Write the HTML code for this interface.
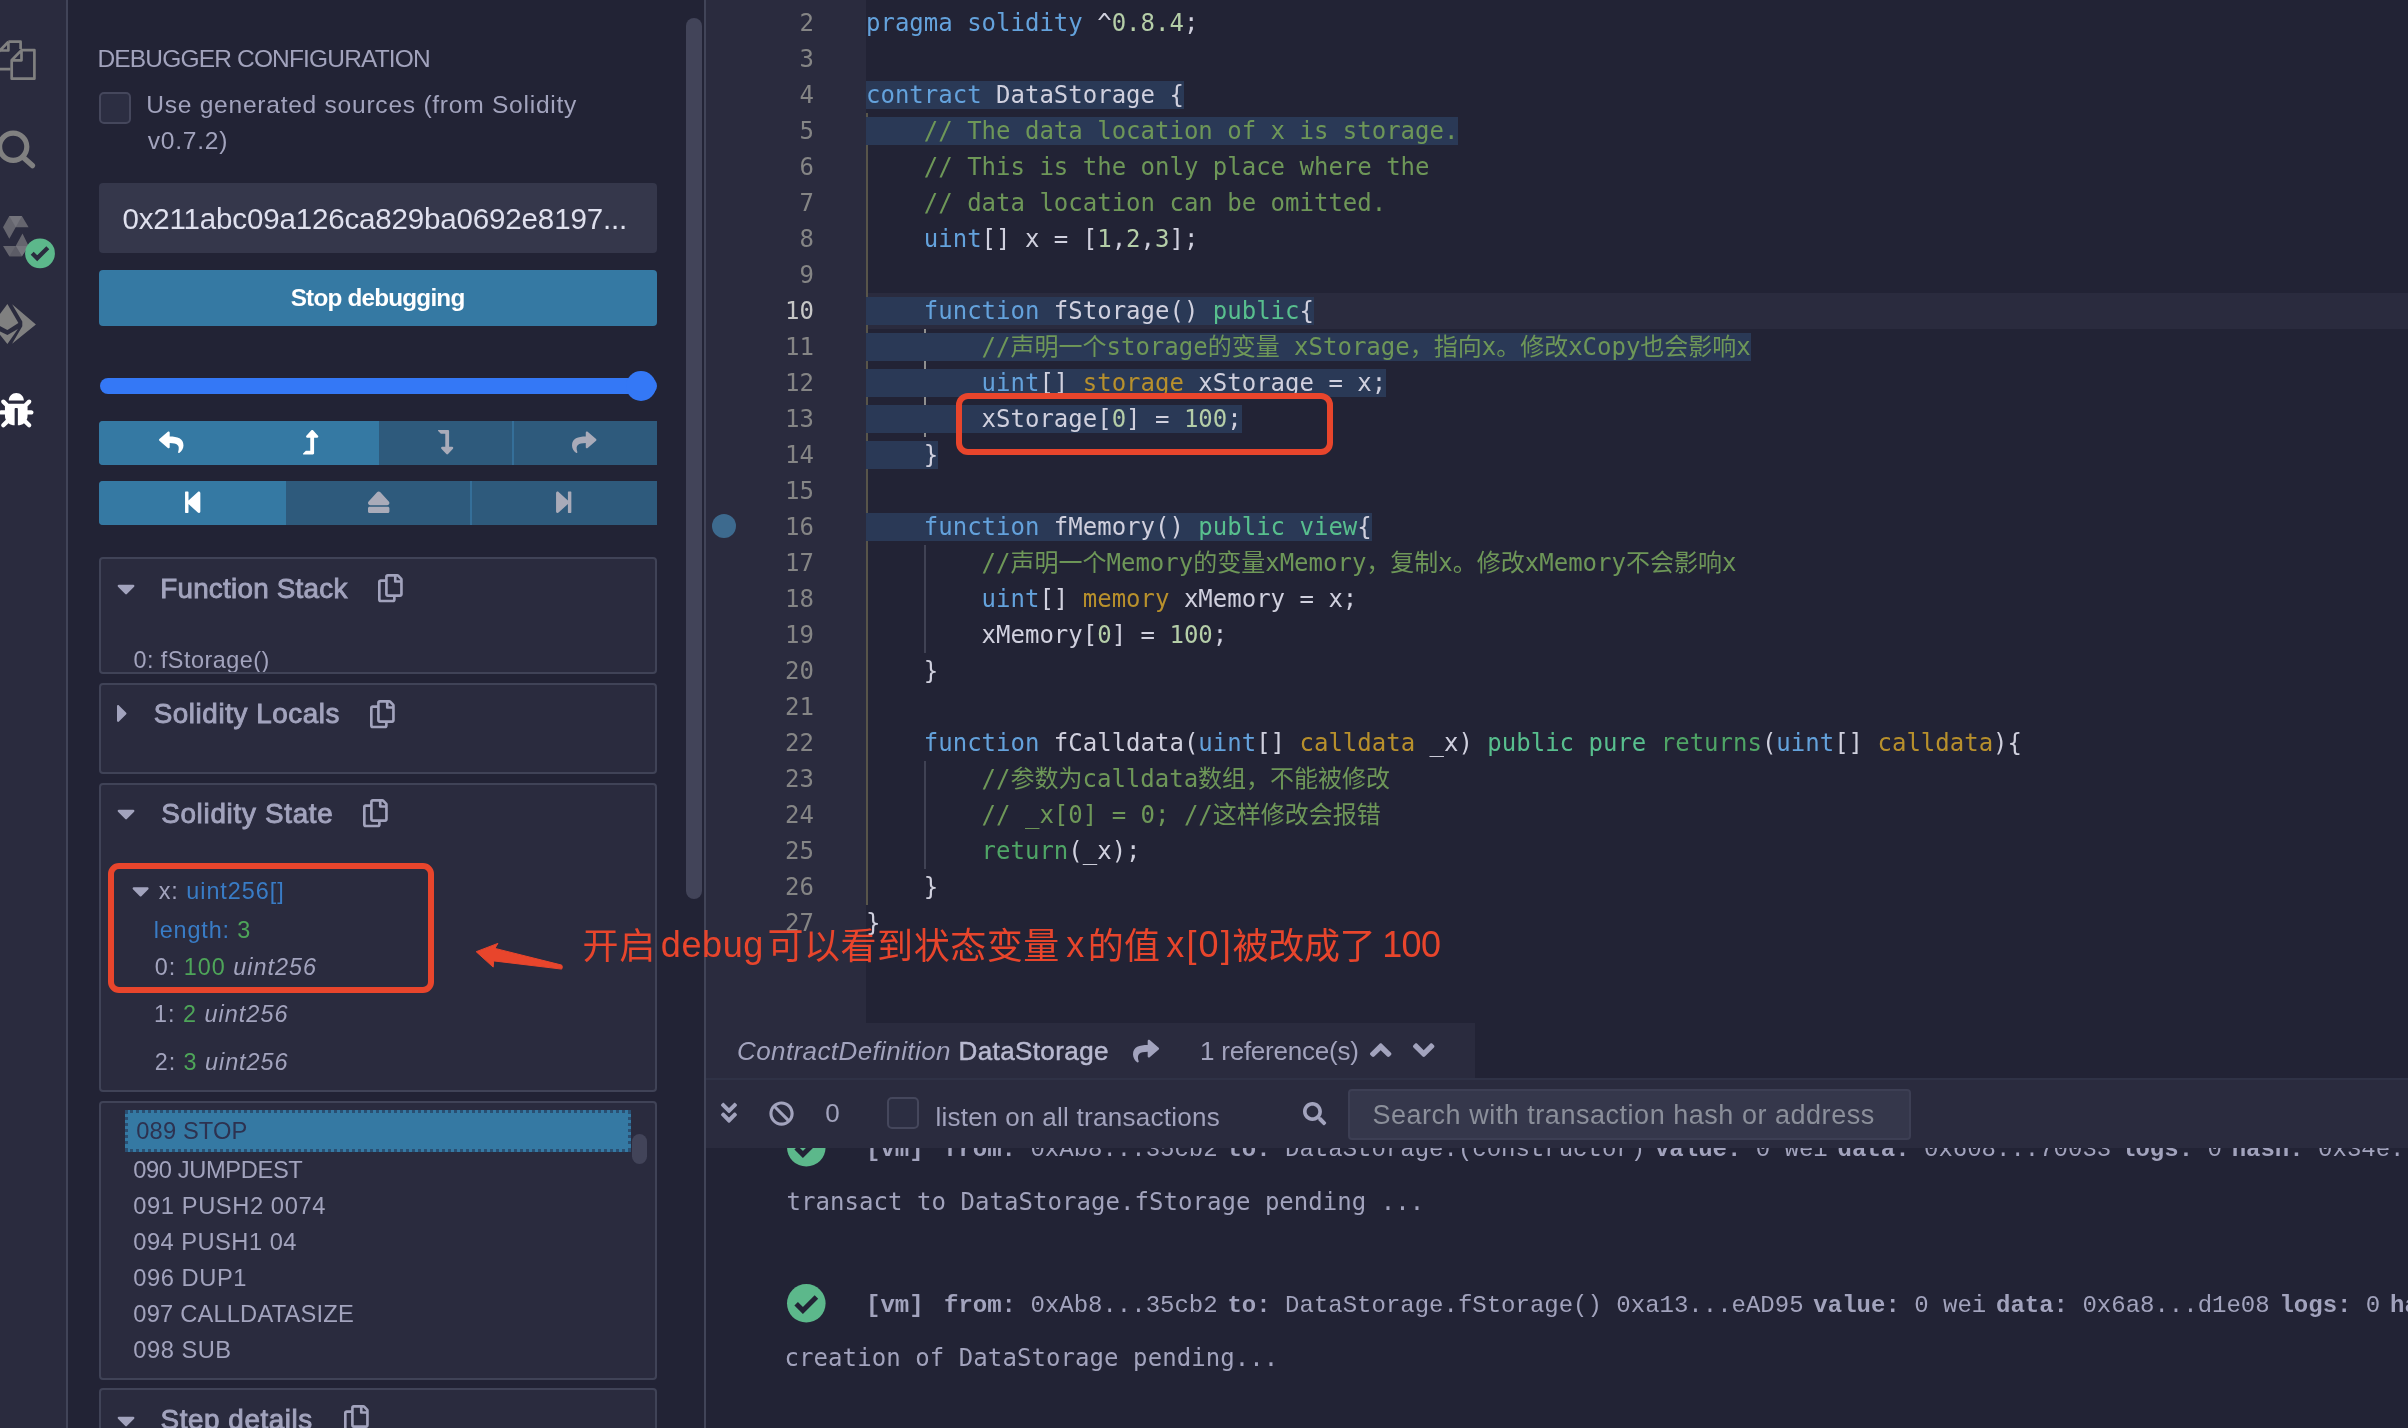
<!DOCTYPE html>
<html lang="zh">
<head>
<meta charset="utf-8">
<title>Remix debugger</title>
<style>
*{box-sizing:border-box;margin:0;padding:0}
html,body{width:2408px;height:1428px;overflow:hidden;background:#222335}
body{position:relative;font-family:"Liberation Sans","Noto Sans CJK SC",sans-serif;color:#a2a3bd}
#root{position:absolute;left:0;top:0;width:2408px;height:1428px;will-change:transform}
.a{position:absolute;white-space:nowrap}
svg{position:absolute;overflow:visible}
/* regions */
#iconbar{left:0;top:0;width:66px;height:1428px;background:#2a2b3e}
#iconbar-b{left:66px;top:0;width:2px;height:1428px;background:#414458}
#side{left:68px;top:0;width:636px;height:1428px;background:#222335}
#split{left:704px;top:0;width:2px;height:1428px;background:#414458}
#gutter{left:706px;top:0;width:160px;height:1023px;background:#2a2b3e}
.box{border:2px solid #404357;background:#2a2b3e;border-radius:4px}
.t{font-size:25px;line-height:36px;color:#a2a3bd}
.h{font-size:27px;line-height:36px;font-weight:normal;-webkit-text-stroke:0.9px #a2a3bd;color:#a2a3bd}
.blue{color:#397cc6}.green{color:#4ea559}
i{font-style:italic}
/* code */
.ln{left:706px;width:108px;text-align:right;font:24px/36px "DejaVu Sans Mono","Noto Sans CJK SC",monospace;color:#858585;height:36px}
.cl{left:866px;font:24px/36px "DejaVu Sans Mono","Noto Sans CJK SC",monospace;color:#d0d0de;height:36px;white-space:pre}
.cl span.hl{background:#2a3956}
.k{color:#64a2dc}.c{color:#6e9758}.n{color:#b5cea8}.v{color:#58bf8e}.s{color:#b8902c}.r{color:#4fa566}.w{color:#d4d4d4}
.ig{width:2px;background:#404254}
.term{font:24px/36px "DejaVu Sans Mono",monospace;color:#a2a3bd}
.log{font:24px/36px "Liberation Mono",monospace;color:#a2a3bd;white-space:pre}
.lb{font-weight:bold}
.li{display:inline-block;margin-right:9.8px}
.log b{font-weight:bold}
.red{font:300 36px/50px 'Liberation Sans','Noto Sans CJK SC',sans-serif;color:#e8452c}
#t-cfg{left:97.50px!important;top:41.40px!important;letter-spacing:-0.834px}
#t-use1{left:146.20px!important;top:87.00px!important;letter-spacing:0.731px}
#t-use2{left:147.70px!important;top:123.10px!important;letter-spacing:0.751px}
#t-hash{left:122.40px!important;top:200.60px!important;letter-spacing:-0.151px}
#t-stop{left:290.70px!important;top:280.30px!important;letter-spacing:-0.796px}
#t-fs{left:160.20px!important;top:570.80px!important;letter-spacing:0.256px}
#t-fs0{left:32.40px!important;top:82.60px!important;letter-spacing:0.489px}
#t-sl{left:153.70px!important;top:695.90px!important;letter-spacing:0.579px}
#t-ss{left:161.20px!important;top:795.90px!important;letter-spacing:0.718px}
#t-x{left:158.70px!important;top:872.60px!important;letter-spacing:0.957px}
#t-len{left:153.70px!important;top:911.71px!important;letter-spacing:0.850px}
#t-v0{left:154.70px!important;top:949.10px!important;letter-spacing:1.000px}
#t-v1{left:154.00px!important;top:996.40px!important;letter-spacing:1.012px}
#t-v2{left:154.70px!important;top:1043.80px!important;letter-spacing:0.957px}
#t-op0{left:136.30px!important;top:1112.90px!important;letter-spacing:0.120px}
#t-op1{left:133.30px!important;top:1151.80px!important;letter-spacing:-0.387px}
#t-op2{left:133.30px!important;top:1187.71px!important;letter-spacing:0.590px}
#t-op3{left:133.30px!important;top:1223.90px!important;letter-spacing:0.466px}
#t-op4{left:133.30px!important;top:1259.71px!important;letter-spacing:0.549px}
#t-op5{left:133.30px!important;top:1295.60px!important;letter-spacing:0.184px}
#t-op6{left:133.30px!important;top:1331.50px!important;letter-spacing:0.500px}
#t-sd{left:160.50px!important;top:1402.00px!important;letter-spacing:0.589px}
#t-cd{left:737.00px!important;top:1032.71px!important;letter-spacing:0.400px}
#t-ref{left:1200.00px!important;top:1032.71px!important;letter-spacing:-0.231px}
#t-zero{left:825.30px!important;top:1094.80px!important;letter-spacing:0.000px}
#t-listen{left:935.40px!important;top:1098.50px!important;letter-spacing:0.276px}
#t-search{left:1372.40px!important;top:1096.71px!important;letter-spacing:0.528px}
#g-2{left:786.50px!important;top:1183.71px!important;letter-spacing:0.047px}
#g-4{left:784.50px!important;top:1339.80px!important;letter-spacing:0.076px}
#r1{left:582.60px!important;top:922.21px!important;letter-spacing:0.700px}
#r2{left:660.80px!important;top:920.40px!important;letter-spacing:0.600px}
#r3{left:767.40px!important;top:922.21px!important;letter-spacing:0.563px}
#r4{left:1066.20px!important;top:920.40px!important;letter-spacing:0.000px}
#r5{left:1087.80px!important;top:922.21px!important;letter-spacing:0.100px}
#r6{left:1166.20px!important;top:920.40px!important;letter-spacing:2.204px}
#r7{left:1232.60px!important;top:922.21px!important;letter-spacing:-0.333px}
#r8{left:1382.20px!important;top:920.40px!important;letter-spacing:-0.600px}

</style>
</head>
<body>
<div id="root">
<div class="a" id="iconbar"></div>
<div class="a" id="iconbar-b"></div>
<div class="a" id="side"></div>
<div class="a" id="split"></div>
<div class="a" id="gutter"></div>
<!-- side panel scrollbar -->
<div class="a" style="left:686px;top:17.7px;width:16px;height:881.4px;border-radius:8px;background:#424459"></div>
<div class="a t" id="t-cfg" style="left:99px;top:40px;font-size:24.5px">DEBUGGER CONFIGURATION</div>
<div class="a" style="left:99px;top:92px;width:32px;height:32px;border:2px solid #45475c;border-radius:5px;background:#2c2e42"></div>
<div class="a t" id="t-use1" style="left:147px;top:86px;font-size:24.6px">Use generated sources (from Solidity</div>
<div class="a t" id="t-use2" style="left:147px;top:122px;font-size:24.6px">v0.7.2)</div>
<div class="a" style="left:99px;top:183px;width:558px;height:70px;border-radius:4px;background:#35374b"></div>
<div class="a" id="t-hash" style="left:123px;top:200px;line-height:36px;color:#dfe0ee;font-size:29.5px">0x211abc09a126ca829ba0692e8197...</div>
<div class="a" style="left:99px;top:270px;width:558px;height:56px;border-radius:4px;background:#3579a3"></div>
<div class="a" id="t-stop" style="left:290px;top:280px;line-height:36px;font-weight:bold;color:#fff;font-size:24.3px">Stop debugging</div>
<!-- slider -->
<div class="a" style="left:100px;top:378px;width:557px;height:16px;border-radius:8px;background:#3478f6"></div>
<div class="a" style="left:626px;top:371px;width:30px;height:30px;border-radius:15px;background:#3478f6"></div>
<!-- button rows -->
<div class="a" style="left:99px;top:421px;width:558px;height:44px;border-radius:4px 0 0 4px;background:#2e5a7c;overflow:hidden">
 <div class="a" style="left:0;top:0;width:280px;height:44px;background:#3579a3"></div>
 <div class="a" style="left:413px;top:0;width:2px;height:44px;background:#356f99"></div>
</div>
<div class="a" style="left:99px;top:481px;width:558px;height:44px;border-radius:4px 0 0 4px;background:#2e5a7c;overflow:hidden">
 <div class="a" style="left:0;top:0;width:187px;height:44px;background:#3579a3"></div>
 <div class="a" style="left:371px;top:0;width:2px;height:44px;background:#356f99"></div>
</div>
<!-- Function stack -->
<div class="a box" style="left:99px;top:557px;width:558px;height:117px;overflow:hidden">
 <div class="a t" id="t-fs0" style="left:32px;top:83px;font-size:23.4px">0: fStorage()</div>
</div>
<div class="a h" id="t-fs" style="left:160px;top:570px;font-size:27.8px">Function Stack</div>
<div class="a box" style="left:99px;top:683px;width:558px;height:91px"></div>
<div class="a h" id="t-sl" style="left:154px;top:695px;font-size:27.8px">Solidity Locals</div>
<div class="a box" style="left:99px;top:783px;width:558px;height:309px"></div>
<div class="a h" id="t-ss" style="left:160px;top:795px;font-size:27.8px">Solidity State</div>
<div class="a t" id="t-x" style="left:158px;top:872px;font-size:23.4px">x: <span class="blue">uint256[]</span></div>
<div class="a t" id="t-len" style="left:155px;top:911px;font-size:23.4px"><span class="blue">length:</span> <span class="green">3</span></div>
<div class="a t" id="t-v0" style="left:155px;top:949px;font-size:23.4px">0: <span class="green">100</span> <i>uint256</i></div>
<div class="a t" id="t-v1" style="left:155px;top:996px;font-size:23.4px">1: <span class="green">2</span> <i>uint256</i></div>
<div class="a t" id="t-v2" style="left:155px;top:1043px;font-size:23.4px">2: <span class="green">3</span> <i>uint256</i></div>
<!-- opcodes -->
<div class="a box" style="left:99px;top:1101px;width:558px;height:279px"></div>
<div class="a" style="left:125px;top:1110px;width:506px;height:42px;background:#3579a3;border:3px dotted #2a4f72"></div>
<div class="a t" id="t-op0" style="left:136px;top:1112px;color:#2d3250;font-size:23.7px">089 STOP</div>
<div class="a t" id="t-op1" style="left:133px;top:1151px;font-size:23.7px">090 JUMPDEST</div>
<div class="a t" id="t-op2" style="left:133px;top:1187px;font-size:23.7px">091 PUSH2 0074</div>
<div class="a t" id="t-op3" style="left:133px;top:1223px;font-size:23.7px">094 PUSH1 04</div>
<div class="a t" id="t-op4" style="left:133px;top:1259px;font-size:23.7px">096 DUP1</div>
<div class="a t" id="t-op5" style="left:133px;top:1295px;font-size:23.7px">097 CALLDATASIZE</div>
<div class="a t" id="t-op6" style="left:133px;top:1331px;font-size:23.7px">098 SUB</div>
<div class="a" style="left:631.5px;top:1133.8px;width:15.5px;height:30px;border-radius:8px;background:#424459"></div>
<div class="a box" style="left:99px;top:1388px;width:558px;height:60px"></div>
<div class="a h" id="t-sd" style="left:160px;top:1400px;font-size:27.8px">Step details</div>


<div class="a" style="left:866px;top:293px;width:1542px;height:36px;background:#2a2b3e"></div>
<div class="a ig" style="left:866px;top:113px;height:792px;background:#58554a"></div>
<div class="a ig" style="left:924px;top:329px;height:108px;background:#8f8f8f"></div>
<div class="a ig" style="left:924px;top:545px;height:108px"></div>
<div class="a ig" style="left:924px;top:761px;height:108px"></div>
<div class="a ln" style="top:5px">2</div>
<div class="a cl" id="L2" style="top:5px"><span class="k">pragma</span> <span class="k">solidity</span> ^<span class="n">0.8.4</span>;</div>
<div class="a ln" style="top:41px">3</div>
<div class="a ln" style="top:77px">4</div>
<div class="a cl" id="L4" style="top:77px"><span class="hl"><span class="k">contract</span> DataStorage {</span></div>
<div class="a ln" style="top:113px">5</div>
<div class="a cl" id="L5" style="top:113px"><span class="hl">    <span class="c">// The data location of x is storage.</span></span></div>
<div class="a ln" style="top:149px">6</div>
<div class="a cl" id="L6" style="top:149px">    <span class="c">// This is the only place where the</span></div>
<div class="a ln" style="top:185px">7</div>
<div class="a cl" id="L7" style="top:185px">    <span class="c">// data location can be omitted.</span></div>
<div class="a ln" style="top:221px">8</div>
<div class="a cl" id="L8" style="top:221px">    <span class="k">uint</span>[] x = [<span class="n">1</span>,<span class="n">2</span>,<span class="n">3</span>];</div>
<div class="a ln" style="top:257px">9</div>
<div class="a ln" style="top:293px;color:#c6c6c6">10</div>
<div class="a cl" id="L10" style="top:293px"><span class="hl">    <span class="k">function</span> fStorage() <span class="v">public</span>{</span></div>
<div class="a ln" style="top:329px">11</div>
<div class="a cl" id="L11" style="top:329px"><span class="hl">        <span class="c">//声明一个storage的变量 xStorage，指向x。修改xCopy也会影响x</span></span></div>
<div class="a ln" style="top:365px">12</div>
<div class="a cl" id="L12" style="top:365px"><span class="hl">        <span class="k">uint</span>[] <span class="s">storage</span> xStorage = x;</span></div>
<div class="a ln" style="top:401px">13</div>
<div class="a cl" id="L13" style="top:401px"><span class="hl">        xStorage[<span class="n">0</span>] = <span class="n">100</span>;</span></div>
<div class="a ln" style="top:437px">14</div>
<div class="a cl" id="L14" style="top:437px"><span class="hl">    }</span></div>
<div class="a ln" style="top:473px">15</div>
<div class="a ln" style="top:509px">16</div>
<div class="a cl" id="L16" style="top:509px"><span class="hl">    <span class="k">function</span> fMemory() <span class="v">public</span> <span class="v">view</span>{</span></div>
<div class="a ln" style="top:545px">17</div>
<div class="a cl" id="L17" style="top:545px">        <span class="c">//声明一个Memory的变量xMemory，复制x。修改xMemory不会影响x</span></div>
<div class="a ln" style="top:581px">18</div>
<div class="a cl" id="L18" style="top:581px">        <span class="k">uint</span>[] <span class="s">memory</span> xMemory = x;</div>
<div class="a ln" style="top:617px">19</div>
<div class="a cl" id="L19" style="top:617px">        xMemory[<span class="n">0</span>] = <span class="n">100</span>;</div>
<div class="a ln" style="top:653px">20</div>
<div class="a cl" id="L20" style="top:653px">    }</div>
<div class="a ln" style="top:689px">21</div>
<div class="a ln" style="top:725px">22</div>
<div class="a cl" id="L22" style="top:725px">    <span class="k">function</span> fCalldata(<span class="k">uint</span>[] <span class="s">calldata</span> _x) <span class="v">public</span> <span class="v">pure</span> <span class="r">returns</span>(<span class="k">uint</span>[] <span class="s">calldata</span>){</div>
<div class="a ln" style="top:761px">23</div>
<div class="a cl" id="L23" style="top:761px">        <span class="c">//参数为calldata数组，不能被修改</span></div>
<div class="a ln" style="top:797px">24</div>
<div class="a cl" id="L24" style="top:797px">        <span class="c">// _x[0] = 0; //这样修改会报错</span></div>
<div class="a ln" style="top:833px">25</div>
<div class="a cl" id="L25" style="top:833px">        <span class="r">return</span>(_x);</div>
<div class="a ln" style="top:869px">26</div>
<div class="a cl" id="L26" style="top:869px">    }</div>
<div class="a ln" style="top:905px">27</div>
<div class="a cl" id="L27" style="top:905px">}</div>
<div class="a" style="left:712px;top:514px;width:24px;height:24px;border-radius:12px;background:#3d6a8e"></div>
<div class="a" style="left:706px;top:1023px;width:768.5px;height:55px;background:#2a2b3e"></div>
<div class="a t" id="t-cd" style="left:737px;top:1032px;font-size:26px"><i>ContractDefinition</i> <b style="font-weight:normal;color:#b9bad1;-webkit-text-stroke:0.5px #b9bad1">DataStorage</b></div>
<div class="a t" id="t-ref" style="left:1200px;top:1032px;font-size:26px">1 reference(s)</div>


<div class="a log lb" id="g-1-vm" style="left:866.0px;top:1132.0px">[vm]</div><div class="a log" id="g-1" style="left:944.0px;top:1132.0px"><span class="li"><b>from<span>:</span></b> 0xAb8...35cb2</span><span class="li"><b>to<span>:</span></b> DataStorage.(constructor)</span><span class="li"><b>value<span>:</span></b> 0 wei</span><span class="li"><b>data<span>:</span></b> 0x608...70033</span><span class="li"><b>logs<span>:</span></b> 0</span><span class="li"><b>hash<span>:</span></b> 0x34e...1a2b3</span></div>
<svg style="left:786.7px;top:1127.7px" width="38.6" height="38.6" viewBox="-20 -20 40 40"><circle r="20" fill="#5cb88b"/><path d="M-10.5 0.5L-3.5 7.5L10.5-6.5" fill="none" stroke="#222335" stroke-width="5.2"/></svg>
<div class="a term" id="g-2" style="left:787px;top:1183px">transact to DataStorage.fStorage pending ...</div>
<svg style="left:786.7px;top:1283.5px" width="38.6" height="38.6" viewBox="-20 -20 40 40"><circle r="20" fill="#5cb88b"/><path d="M-10.5 0.5L-3.5 7.5L10.5-6.5" fill="none" stroke="#222335" stroke-width="5.2"/></svg>
<div class="a log lb" id="g-3-vm" style="left:866.0px;top:1288.0px">[vm]</div><div class="a log" id="g-3" style="left:944.0px;top:1288.0px"><span class="li"><b>from<span>:</span></b> 0xAb8...35cb2</span><span class="li"><b>to<span>:</span></b> DataStorage.fStorage() 0xa13...eAD95</span><span class="li"><b>value<span>:</span></b> 0 wei</span><span class="li"><b>data<span>:</span></b> 0x6a8...d1e08</span><span class="li"><b>logs<span>:</span></b> 0</span><span class="li"><b>hash<span>:</span></b> 0x2ee...c94f1</span></div>
<div class="a term" id="g-4" style="left:787px;top:1339px">creation of DataStorage pending...</div>
<div class="a" style="left:706px;top:1078px;width:1702px;height:69.5px;background:#2a2b3e;border-top:2px solid #2f3246"></div>
<div class="a t" id="t-zero" style="left:824px;top:1095px;font-size:26px">0</div>
<div class="a" style="left:887px;top:1097px;width:32px;height:32px;border:2px solid #45475c;border-radius:5px;background:#2c2e42"></div>
<div class="a t" id="t-listen" style="left:936px;top:1099px;font-size:26px">listen on all transactions</div>
<div class="a" style="left:1347.7px;top:1088.5px;width:563.7px;height:51px;border:2px solid #3d3f54;border-radius:4px;background:#35374b"></div>
<div class="a t" id="t-search" style="left:1374px;top:1095px;font-size:27px;color:#8b8f9a">Search with transaction hash or address</div>


<svg style="left:159.4px;top:430.2px" width="24.47" height="24.47" viewBox="0 0 512 512"><path fill="#ffffff" d="M8.309 189.836L184.313 37.851C199.719 24.546 224 35.347 224 56.015v80.053c160.629 1.839 288 34.032 288 186.258 0 61.441-39.581 122.309-83.333 154.132-13.653 9.931-33.111-2.533-28.077-18.631 45.344-145.012-21.507-183.51-176.59-185.742V360c0 20.7-24.3 31.453-39.687 18.164l-176.004-152c-11.071-9.562-11.086-26.753 0-36.328z"/></svg>
<svg style="left:303.2px;top:429.7px" width="15.30" height="24.47" viewBox="0 0 320 512"><path fill="#ffffff" d="M313.553 119.669L209.587 7.666c-9.485-10.214-25.676-10.229-35.174 0L70.438 119.669C56.232 134.969 67.062 160 88.025 160H152v272H68.024a11.996 11.996 0 0 0-8.485 3.515l-56 56C-4.021 499.074 1.333 512 12.024 512H208c13.255 0 24-10.745 24-24V160h63.966c20.878 0 31.851-24.969 17.587-40.331z"/></svg>
<svg style="left:438.0px;top:429.7px" width="15.30" height="24.47" viewBox="0 0 320 512"><path fill="#a9abb9" d="M313.553 392.331L209.587 504.334c-9.485 10.214-25.676 10.229-35.174 0L70.438 392.331C56.232 377.031 67.062 352 88.025 352H152V80H68.024a11.996 11.996 0 0 1-8.485-3.515l-56-56C-4.021 12.926 1.333 0 12.024 0H208c13.255 0 24 10.745 24 24v328h63.966c20.878 0 31.851 24.969 17.587 40.331z"/></svg>
<svg style="left:572.4px;top:430.2px" width="24.47" height="24.47" viewBox="0 0 512 512"><path fill="#a9abb9" d="M503.691 189.836L327.687 37.851C312.281 24.546 288 35.347 288 56.015v80.053C127.371 137.907 0 170.1 0 322.326c0 61.441 39.581 122.309 83.333 154.132 13.653 9.931 33.111-2.533 28.077-18.631C66.066 312.814 132.917 274.316 288 272.085V360c0 20.7 24.3 31.453 39.687 18.164l176.004-152c11.071-9.562 11.086-26.753 0-36.328z"/></svg>
<svg style="left:181.6px;top:489.9px" width="21.41" height="24.47" viewBox="0 0 448 512"><path fill="#ffffff" d="M64 468V44c0-6.6 5.4-12 12-12h48c6.6 0 12 5.4 12 12v176.4l195.5-181C352.1 22.3 384 36.6 384 64v384c0 27.400-31.900 41.700-52.500 24.600L136 292.700V468c0 6.600-5.400 12-12 12H76c-6.600 0-12-5.400-12-12z"/></svg>
<svg style="left:367.5px;top:490.0px" width="21.41" height="24.47" viewBox="0 0 448 512"><path fill="#a9abb9" d="M448 384v64c0 17.673-14.327 32-32 32H32c-17.673 0-32-14.327-32-32v-64c0-17.673 14.327-32 32-32h384c17.673 0 32 14.327 32 32zM48.053 320h351.886c41.651 0 63.581-49.674 35.383-80.435L259.383 47.558c-19.014-20.743-51.751-20.744-70.767 0L12.670 239.565C-15.475 270.268 6.324 320 48.053 320z"/></svg>
<svg style="left:552.9px;top:489.9px" width="21.41" height="24.47" viewBox="0 0 448 512"><path fill="#a9abb9" d="M384 44v424c0 6.600-5.400 12-12 12h-48c-6.600 0-12-5.400-12-12V291.600l-195.500 181C95.900 489.700 64 475.400 64 448V64c0-27.400 31.900-41.700 52.500-24.600L312 219.300V44c0-6.600 5.400-12 12-12h48c6.600 0 12 5.400 12 12z"/></svg>
<svg style="left:116.7px;top:574.0px" width="18.11" height="28.98" viewBox="0 0 320 512"><path fill="#a2a3bd" d="M31.300 192h257.300c17.800 0 26.700 21.500 14.100 34.100L174.100 354.800c-7.800 7.800-20.500 7.800-28.300 0L17.200 226.100C4.600 213.500 13.500 192 31.300 192z"/></svg>
<svg style="left:116.7px;top:699.3px" width="10.87" height="28.98" viewBox="0 0 192 512"><path fill="#a2a3bd" d="M0 384.662V127.338c0-17.818 21.543-26.741 34.142-14.142l128.662 128.662c7.810 7.810 7.810 20.474 0 28.284L34.142 398.804C21.543 411.404 0 402.480 0 384.662z"/></svg>
<svg style="left:116.7px;top:799.0px" width="18.11" height="28.98" viewBox="0 0 320 512"><path fill="#a2a3bd" d="M31.300 192h257.300c17.800 0 26.700 21.500 14.100 34.100L174.100 354.800c-7.800 7.800-20.500 7.800-28.300 0L17.200 226.100C4.600 213.500 13.500 192 31.300 192z"/></svg>
<svg style="left:116.8px;top:1405.5px" width="18.11" height="28.98" viewBox="0 0 320 512"><path fill="#a2a3bd" d="M31.300 192h257.300c17.800 0 26.700 21.500 14.100 34.100L174.100 354.800c-7.800 7.800-20.500 7.800-28.300 0L17.200 226.100C4.600 213.500 13.500 192 31.300 192z"/></svg>
<svg style="left:132.2px;top:876.5px" width="17.28" height="27.65" viewBox="0 0 320 512"><path fill="#a2a3bd" d="M31.300 192h257.300c17.800 0 26.700 21.500 14.100 34.100L174.100 354.800c-7.800 7.800-20.500 7.800-28.300 0L17.200 226.100C4.600 213.500 13.500 192 31.300 192z"/></svg>
<svg style="left:378.3px;top:574.2px" width="24.77" height="28.31" viewBox="0 0 448 512"><path fill="#a2a3bd" d="M433.941 65.941l-51.882-51.882A48 48 0 0 0 348.118 0H176c-26.510 0-48 21.490-48 48v48H48c-26.510 0-48 21.490-48 48v320c0 26.510 21.490 48 48 48h224c26.510 0 48-21.490 48-48v-48h80c26.510 0 48-21.490 48-48V99.882a48 48 0 0 0-14.059-33.941zM266 464H54a6 6 0 0 1-6-6V150a6 6 0 0 1 6-6h74v224c0 26.510 21.490 48 48 48h96v42a6 6 0 0 1-6 6zm128-96H182a6 6 0 0 1-6-6V54a6 6 0 0 1 6-6h106v88c0 13.255 10.745 24 24 24h88v202a6 6 0 0 1-6 6zm6-256h-64V48h9.632c1.591 0 3.117.632 4.243 1.757l48.368 48.368a6 6 0 0 1 1.757 4.243V112z"/></svg>
<svg style="left:369.8px;top:699.5px" width="24.77" height="28.31" viewBox="0 0 448 512"><path fill="#a2a3bd" d="M433.941 65.941l-51.882-51.882A48 48 0 0 0 348.118 0H176c-26.510 0-48 21.490-48 48v48H48c-26.510 0-48 21.490-48 48v320c0 26.510 21.490 48 48 48h224c26.510 0 48-21.490 48-48v-48h80c26.510 0 48-21.490 48-48V99.882a48 48 0 0 0-14.059-33.941zM266 464H54a6 6 0 0 1-6-6V150a6 6 0 0 1 6-6h74v224c0 26.510 21.490 48 48 48h96v42a6 6 0 0 1-6 6zm128-96H182a6 6 0 0 1-6-6V54a6 6 0 0 1 6-6h106v88c0 13.255 10.745 24 24 24h88v202a6 6 0 0 1-6 6zm6-256h-64V48h9.632c1.591 0 3.117.632 4.243 1.757l48.368 48.368a6 6 0 0 1 1.757 4.243V112z"/></svg>
<svg style="left:363.4px;top:799.2px" width="24.77" height="28.31" viewBox="0 0 448 512"><path fill="#a2a3bd" d="M433.941 65.941l-51.882-51.882A48 48 0 0 0 348.118 0H176c-26.510 0-48 21.490-48 48v48H48c-26.510 0-48 21.490-48 48v320c0 26.510 21.490 48 48 48h224c26.510 0 48-21.490 48-48v-48h80c26.510 0 48-21.490 48-48V99.882a48 48 0 0 0-14.059-33.941zM266 464H54a6 6 0 0 1-6-6V150a6 6 0 0 1 6-6h74v224c0 26.510 21.490 48 48 48h96v42a6 6 0 0 1-6 6zm128-96H182a6 6 0 0 1-6-6V54a6 6 0 0 1 6-6h106v88c0 13.255 10.745 24 24 24h88v202a6 6 0 0 1-6 6zm6-256h-64V48h9.632c1.591 0 3.117.632 4.243 1.757l48.368 48.368a6 6 0 0 1 1.757 4.243V112z"/></svg>
<svg style="left:343.9px;top:1405.4px" width="24.77" height="28.31" viewBox="0 0 448 512"><path fill="#a2a3bd" d="M433.941 65.941l-51.882-51.882A48 48 0 0 0 348.118 0H176c-26.510 0-48 21.490-48 48v48H48c-26.510 0-48 21.490-48 48v320c0 26.510 21.490 48 48 48h224c26.510 0 48-21.490 48-48v-48h80c26.510 0 48-21.490 48-48V99.882a48 48 0 0 0-14.059-33.941zM266 464H54a6 6 0 0 1-6-6V150a6 6 0 0 1 6-6h74v224c0 26.510 21.490 48 48 48h96v42a6 6 0 0 1-6 6zm128-96H182a6 6 0 0 1-6-6V54a6 6 0 0 1 6-6h106v88c0 13.255 10.745 24 24 24h88v202a6 6 0 0 1-6 6zm6-256h-64V48h9.632c1.591 0 3.117.632 4.243 1.757l48.368 48.368a6 6 0 0 1 1.757 4.243V112z"/></svg>
<svg style="left:721.4px;top:1100.4px" width="16.00" height="25.60" viewBox="0 0 320 512"><path fill="#a2a3bd" d="M143 256.300L7 120.300c-9.400-9.400-9.400-24.600 0-33.900l22.600-22.600c9.400-9.400 24.600-9.400 33.900 0l96.400 96.400 96.400-96.400c9.400-9.400 24.600-9.400 33.900 0L313 86.300c9.400 9.400 9.400 24.600 0 33.900l-136 136c-9.200 9.500-24.400 9.500-33.800.100zm34 192l136-136c9.400-9.400 9.400-24.600 0-33.900l-22.600-22.600c-9.400-9.400-24.600-9.400-33.900 0L160 352.100l-96.400-96.400c-9.400-9.400-24.600-9.400-33.900 0L7 278.300c-9.400 9.400-9.400 24.600 0 33.900l136 136c9.400 9.500 24.600 9.500 34 .100z"/></svg>
<svg style="left:769.1px;top:1101.1px" width="25.09" height="25.09" viewBox="0 0 512 512"><path fill="#a2a3bd" d="M256 8C119.034 8 8 119.033 8 256s111.034 248 248 248 248-111.034 248-248S392.967 8 256 8zm130.108 117.892c65.448 65.448 70 165.481 20.677 235.637L150.470 105.216c70.204-49.356 170.226-44.735 235.638 20.676zM125.892 386.108c-65.448-65.448-70-165.481-20.677-235.637L361.530 406.784c-70.203 49.356-170.226 44.736-235.638-20.676z"/></svg>
<svg style="left:1302.6px;top:1101.5px" width="23.30" height="23.30" viewBox="0 0 512 512"><path fill="#a2a3bd" d="M505 442.700L405.300 343c-4.500-4.500-10.600-7-17-7H372c27.600-35.300 44-79.700 44-128C416 93.100 322.900 0 208 0S0 93.100 0 208s93.100 208 208 208c48.300 0 92.700-16.400 128-44v16.300c0 6.400 2.500 12.500 7 17l99.700 99.700c9.400 9.400 24.600 9.400 33.900 0l28.300-28.300c9.400-9.400 9.400-24.600.100-34zM208 336c-70.700 0-128-57.200-128-128 0-70.700 57.200-128 128-128 70.700 0 128 57.200 128 128 0 70.700-57.200 128-128 128z"/></svg>
<svg style="left:1133.3px;top:1038.0px" width="26.11" height="26.11" viewBox="0 0 512 512"><path fill="#a2a3bd" d="M503.691 189.836L327.687 37.851C312.281 24.546 288 35.347 288 56.015v80.053C127.371 137.907 0 170.1 0 322.326c0 61.441 39.581 122.309 83.333 154.132 13.653 9.931 33.111-2.533 28.077-18.631C66.066 312.814 132.917 274.316 288 272.085V360c0 20.7 24.3 31.453 39.687 18.164l176.004-152c11.071-9.562 11.086-26.753 0-36.328z"/></svg>
<svg style="left:1369.9px;top:1033.1px" width="21.44" height="34.30" viewBox="0 0 320 512"><path fill="#a2a3bd" d="M177 159.700l136 136c9.400 9.400 9.400 24.600 0 33.900l-22.600 22.600c-9.400 9.400-24.600 9.400-33.900 0L160 255.900l-96.400 96.400c-9.400 9.400-24.600 9.400-33.900 0L7 329.700c-9.400-9.400-9.400-24.600 0-33.900l136-136c9.400-9.500 24.600-9.500 34-.100z"/></svg>
<svg style="left:1412.8px;top:1033.1px" width="21.44" height="34.30" viewBox="0 0 320 512"><path fill="#a2a3bd" d="M143 352.300L7 216.300c-9.400-9.400-9.400-24.600 0-33.900l22.600-22.600c9.400-9.400 24.600-9.400 33.900 0l96.400 96.400 96.400-96.400c9.400-9.400 24.600-9.400 33.900 0l22.600 22.600c9.400 9.400 9.400 24.600 0 33.900l-136 136c-9.200 9.400-24.400 9.400-33.800 0z"/></svg>
<svg style="left:-1.3px;top:393.2px" width="34.5" height="34.5" viewBox="0 0 512 512"><path fill="#fff" d="M511.988 288.900c-.478 17.430-15.217 31.100-32.653 31.100H424v16c0 21.864-4.882 42.584-13.600 61.145l60.228 60.228c12.496 12.497 12.496 32.758 0 45.255-12.498 12.497-32.759 12.496-45.256 0l-54.736-54.736C345.886 467.965 314.351 480 280 480V236c0-6.627-5.373-12-12-12h-24c-6.627 0-12 5.373-12 12v244c-34.351 0-65.886-12.035-90.636-32.108l-54.736 54.736c-12.498 12.497-32.759 12.496-45.256 0-12.496-12.497-12.496-32.758 0-45.255l60.228-60.228C92.882 378.584 88 357.864 88 336v-16H32.666C15.230 320 .491 306.330.013 288.900-.484 270.816 14.028 256 32 256h56v-58.745l-46.628-46.628c-12.496-12.497-12.496-32.758 0-45.255 12.498-12.497 32.758-12.497 45.256 0L141.255 160h229.489l54.627-54.627c12.498-12.497 32.758-12.497 45.256 0 12.496 12.497 12.496 32.758 0 45.255L424 197.255V256h56c17.972 0 32.484 14.816 31.988 32.900zM257 0c-61.856 0-112 50.144-112 112h224C369 50.144 318.856 0 257 0z"/></svg>
<svg style="left:0;top:0" width="67" height="440" viewBox="0 0 67 440"><g fill="none" stroke="#808080" stroke-width="2.7" stroke-linejoin="round"><path d="M8.4 41.7H20.6V49M8.4 41.7L-3 53.5M8.4 41.7V50.5H-3M-3 69.1H10.4"/><path d="M21.5 50.1H34.4V78.7H11.7V60.3L21.5 50.1V60.3H11.7"/></g><circle cx="13.2" cy="146.8" r="13.6" fill="none" stroke="#808080" stroke-width="5.2"/><path d="M23.4 157.4L32.4 165.6" stroke="#808080" stroke-width="5.4" stroke-linecap="round"/><path d="M9.3 216H21.9L28.6 227.2H15.7L9.3 238.7L3 227.2Z" fill="#65656e"/><path d="M9.3 216H21.9L15.7 227.2Z" fill="#74747c"/><path d="M22.5 233.6L28.6 245.9L21.9 256.3H9.3L3 245.9H15.7Z" fill="#65656e"/><path d="M15.7 245.9H28.6L21.9 256.3Z" fill="#74747c"/><path d="M15.7 245.9L9.3 256.3H21.9Z" fill="#5c5c66"/><circle cx="40" cy="253.4" r="14.9" fill="#5cb88b"/><path d="M32.2 253.2L37.2 258.2L47.8 247.8" fill="none" stroke="#2a2b3e" stroke-width="4.2"/><path d="M7.4 303.9L18.4 323.1L7.4 330L-3 324.5V318Z" fill="#808080"/><path d="M-3 330L7.4 335L17.9 328.9L7.4 344.1L-3 331Z" fill="#808080"/><path d="M12.1 304.2L35.9 324.5L12.1 343.8L22.3 326.3V321.5Z" fill="#808080"/></svg>

<div class="a" style="left:956.4px;top:392.9px;width:376.5px;height:62.5px;border:6px solid #e8452c;border-radius:12px"></div>
<div class="a" style="left:108.1px;top:863.2px;width:326px;height:130px;border:6px solid #e8452c;border-radius:11px"></div>
<div class="a red" id="r1" style="font-weight:400;left:583.3px;top:920px">开启</div><div class="a red" id="r2" style="left:660.9px;top:920px">debug</div><div class="a red" id="r3" style="font-weight:400;left:768.2px;top:920px">可以看到状态变量</div><div class="a red" id="r4" style="left:1065.6px;top:920px">x</div><div class="a red" id="r5" style="font-weight:400;left:1089.4px;top:920px">的值</div><div class="a red" id="r6" style="left:1166.1px;top:920px">x[0]</div><div class="a red" id="r7" style="font-weight:400;left:1232.8px;top:920px">被改成了</div><div class="a red" id="r8" style="left:1383.6px;top:920px">100</div>
<svg style="left:470px;top:935px" width="100" height="40" viewBox="470 935 100 40"><path d="M476.2 951.7L497.9 943.4L494.9 948.4L561.7 965.1Q563 967 561.7 969.1L493.7 960.9L493.2 967.1Z" fill="#e8452c" stroke="#e8452c" stroke-width="1" stroke-linejoin="round"/></svg>


</div>
</body>
</html>
